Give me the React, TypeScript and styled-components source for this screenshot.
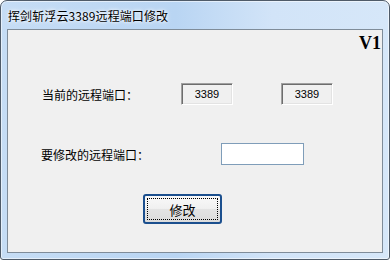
import React from 'react';
import styled, { createGlobalStyle } from 'styled-components';

const GlobalStyle = createGlobalStyle`
  html, body {
    margin: 0;
    padding: 0;
    background: #ffffff;
  }
  body {
    font-family: 'Noto Sans CJK SC', 'DejaVu Sans', sans-serif;
  }
`;

const Window = styled.div`
  box-sizing: border-box;
  width: 390px;
  height: 260px;
  display: flex;
  flex-direction: column;
  border: 1px solid #4f5b69;
  border-radius: 7px 7px 3px 3px;
  background: linear-gradient(90deg, #c6ddf5 0%, #b9d5f3 45%, #d2e4f8 70%, #d6e7f9 100%);
  padding: 0 6px 6px 6px;
  box-shadow: inset 0 0 0 1px rgba(255, 255, 255, 0.55);
`;

const TitleBar = styled.div`
  height: 28px;
  display: flex;
  align-items: center;
  padding-left: 1px;
  font-size: 12px;
  color: #000;
  text-shadow: 0 0 5px #fff, 0 0 3px #fff;
  letter-spacing: 0.1px;
`;

const Client = styled.div`
  flex: 1;
  box-sizing: border-box;
  display: flex;
  flex-direction: column;
  border: 1px solid #7f8c99;
  background: #f0f0f0;
`;

const VersionRow = styled.div`
  height: 22px;
  display: flex;
  justify-content: flex-end;
  align-items: flex-end;
  padding-right: 1px;
`;

const Version = styled.span`
  font-family: 'Liberation Serif', serif;
  font-weight: bold;
  font-size: 18px;
  line-height: 18px;
  color: #000;
`;

const FormRow = styled.div<{ $top: number; $left: number }>`
  display: flex;
  align-items: center;
  height: 22px;
  margin-top: ${(p) => p.$top}px;
  padding-left: ${(p) => p.$left}px;
`;

const Label = styled.span<{ $width: number }>`
  width: ${(p) => p.$width}px;
  font-size: 12px;
  color: #000;
`;

const ReadOnlyBox = styled.div`
  box-sizing: border-box;
  width: 52px;
  height: 22px;
  display: flex;
  align-items: center;
  justify-content: center;
  background: #f0f0f0;
  border-top: 1px solid #a0a0a0;
  border-left: 1px solid #a0a0a0;
  border-right: 1px solid #ffffff;
  border-bottom: 1px solid #ffffff;
  box-shadow: inset 1px 1px 0 #6d6d6d, inset -1px -1px 0 #e3e3e3;
  font-family: 'Liberation Sans', Arial, sans-serif;
  font-size: 11px;
  color: #000;
`;

const Spacer = styled.div<{ $w: number }>`
  width: ${(p) => p.$w}px;
`;

const TextInput = styled.input`
  box-sizing: border-box;
  width: 83px;
  height: 22px;
  border: 1px solid #7f9db9;
  background: #ffffff;
  outline: none;
  padding: 0 3px;
`;

const ButtonRow = styled.div`
  display: flex;
  margin-top: 29px;
  padding-left: 135px;
`;

const Button = styled.button`
  box-sizing: border-box;
  width: 79px;
  height: 30px;
  padding: 2px;
  border: 2px solid #1b4f8e;
  border-radius: 3px;
  background: linear-gradient(180deg, #f9f9f9 0%, #f0f0f0 48%, #e3e3e3 52%, #dcdcdc 100%);
  display: flex;
  font-family: 'Noto Sans CJK SC', sans-serif;
  font-size: 13px;
  color: #000;
`;

const FocusRect = styled.span`
  flex: 1;
  display: flex;
  align-items: center;
  justify-content: center;
  border: 1px dotted #000;
`;

export default function App() {
  return (
    <>
      <GlobalStyle />
      <Window>
        <TitleBar>挥剑斩浮云3389远程端口修改</TitleBar>
        <Client>
          <VersionRow>
            <Version>V1</Version>
          </VersionRow>
          <FormRow $top={31} $left={34}>
            <Label $width={139}>当前的远程端口：</Label>
            <ReadOnlyBox>3389</ReadOnlyBox>
            <Spacer $w={48} />
            <ReadOnlyBox>3389</ReadOnlyBox>
          </FormRow>
          <FormRow $top={38} $left={33}>
            <Label $width={180}>要修改的远程端口：</Label>
            <TextInput />
          </FormRow>
          <ButtonRow>
            <Button>
              <FocusRect>修改</FocusRect>
            </Button>
          </ButtonRow>
        </Client>
      </Window>
    </>
  );
}
